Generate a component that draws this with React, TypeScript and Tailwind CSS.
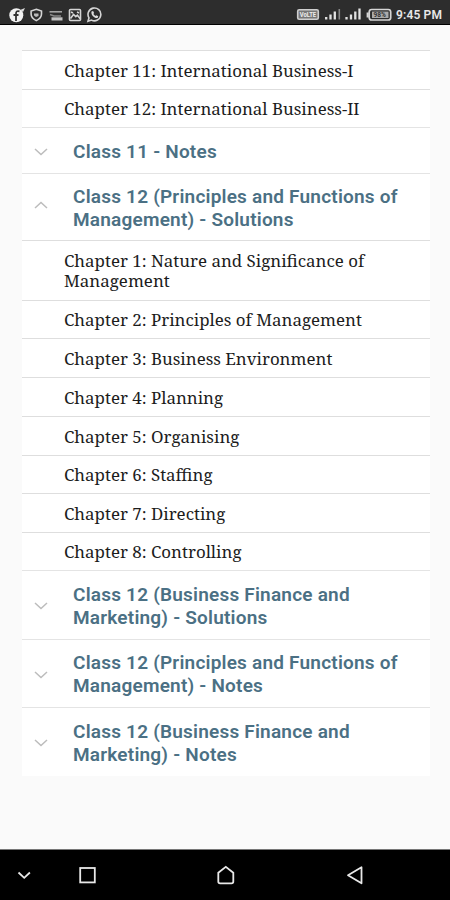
type Row = {
  kind: 'chapter' | 'section';
  title: string;
  size: string;
  open?: boolean;
};

const rows: Row[] = [
  { kind: 'chapter', title: 'Chapter 11: International Business-I', size: 'h-[39px]' },
  { kind: 'chapter', title: 'Chapter 12: International Business-II', size: 'h-[38px]' },
  { kind: 'section', title: 'Class 11 - Notes', size: 'h-[46px]' },
  { kind: 'section', title: 'Class 12 (Principles and Functions of Management) - Solutions', size: 'h-[67px]', open: true },
  { kind: 'chapter', title: 'Chapter 1: Nature and Significance of Management', size: 'h-[60px]' },
  { kind: 'chapter', title: 'Chapter 2: Principles of Management', size: 'h-[38px]' },
  { kind: 'chapter', title: 'Chapter 3: Business Environment', size: 'h-[39px]' },
  { kind: 'chapter', title: 'Chapter 4: Planning', size: 'h-[39px]' },
  { kind: 'chapter', title: 'Chapter 5: Organising', size: 'h-[39px]' },
  { kind: 'chapter', title: 'Chapter 6: Staffing', size: 'h-[38px]' },
  { kind: 'chapter', title: 'Chapter 7: Directing', size: 'h-[39px]' },
  { kind: 'chapter', title: 'Chapter 8: Controlling', size: 'h-[38px]' },
  { kind: 'section', title: 'Class 12 (Business Finance and Marketing) - Solutions', size: 'h-[69px]' },
  { kind: 'section', title: 'Class 12 (Principles and Functions of Management) - Notes', size: 'h-[68px]' },
  { kind: 'section', title: 'Class 12 (Business Finance and Marketing) - Notes', size: 'h-[69px]' },
];

function Chapter({ row }: { row: Row }) {
  return (
    <div
      className={`flex items-center border-t border-[#dedede] pl-[42px] pr-6 pt-px font-['Noto_Serif','DejaVu_Serif_Condensed','DejaVu_Serif',serif] text-[16.9px] leading-5 text-[#1c1c1c] ${row.size}`}
    >
      <p>{row.title}</p>
    </div>
  );
}

function Section({ row }: { row: Row }) {
  return (
    <div className={`flex items-center border-t border-[#e4e4e4] ${row.size}`}>
      <svg
        className={`ml-3 h-3.5 w-3.5 shrink-0 ${row.open ? '-mt-1' : 'mt-0.5'}`}
        viewBox="0 0 14 14"
        fill="none"
        stroke="#bcbcbc"
        strokeWidth="1.5"
      >
        {row.open ? <path d="M1 10 7 4.5 13 10" /> : <path d="M1 4 7 9.5 13 4" />}
      </svg>
      <p className="ml-[25px] w-[340px] pt-px font-[Roboto,sans-serif] text-[19px] font-semibold leading-[23px] tracking-[0.21px] text-[#4b7084]">
        {row.title}
      </p>
    </div>
  );
}

function StatusBar() {
  return (
    <div className="flex h-[25px] items-center border-b border-black bg-[#2d2d2d] pl-[9px] pt-1.5">
      <svg width="95" height="17" viewBox="9 7 95 17" fill="none" stroke="#d5d5d5" strokeWidth="1.6">
        <circle cx="16.3" cy="15.3" r="7" fill="#f2f2f2" stroke="none" />
        <path d="M20 10 25 8l-2 4" fill="#ddd" stroke="none" />
        <path d="M19.5 11.3c-2.5-.8-3.5.3-3.5 2.4V21M13.5 15h5" stroke="#333" strokeWidth="1.8" />
        <path d="M36.3 9.3 41.5 11v3c0 3.3-2.3 5.2-5.2 6.6-2.9-1.4-5.2-3.3-5.2-6.6v-3z" />
        <path d="M34 13.5h4.5v2.5L36 17l-2-1.5z" fill="#bbb" stroke="none" />
        <path d="M49.5 11.8h12.5" stroke="#aaa" strokeWidth="1.5" />
        <path d="M50 14.5l4 1.5h7" stroke="#888" strokeWidth="1.5" />
        <path d="M51.5 18.9h11" stroke="#c2c2c2" strokeWidth="3.2" />
        <rect x="69.5" y="9.5" width="11" height="11" rx="1" />
        <path d="m70.5 18.5 3-4 2.3 2.2 1.6-1.5 2.8 3.5M71 12l2 1M77 12l2 1" />
        <path d="M88 21.3 89 17.8a6.4 6.4 0 1 1 2.5 2.3z" />
        <path d="M91.5 11.5c-.8 3.5 2.8 7 6 6.5l.8-1.8-2-1-1 .8-2-2 .8-1-1-2z" fill="#ddd" stroke="none" />
      </svg>
      <div className="flex-1" />
      <svg width="97" height="17" viewBox="295 7 97 17" fill="none">
        <rect x="297.7" y="9.7" width="20.6" height="9.6" rx="1.5" stroke="#cfcfcf" strokeWidth="1.6" fill="#777" />
        <text x="299.7" y="17" fontSize="6.3" fontWeight="bold" fill="#eee" fontFamily="Roboto" textLength="16.5" lengthAdjust="spacingAndGlyphs">VoLTE</text>
        <path d="M326.2 17v2.5M330.5 14.5v5M334.8 11.5v8M346.5 17v2.5M351 14.5v5M355.3 11.5v8M359.5 8.5v11" stroke="#e2e2e2" strokeWidth="2.3" />
        <path d="M339.3 9v10.5" stroke="#888" strokeWidth="1.6" />
        <rect x="369.2" y="9.5" width="21.5" height="10.5" rx="2.5" stroke="#d5d5d5" strokeWidth="1.7" />
        <path d="M367.7 12.5v5" stroke="#d5d5d5" strokeWidth="2.2" />
        <rect x="372" y="11.6" width="16.5" height="6.4" fill="#aaa" />
        <text x="373.5" y="17.3" fontSize="6.6" fontWeight="bold" fill="#333" fontFamily="Roboto">98%</text>
      </svg>
      <div className="ml-1 w-[54px] whitespace-nowrap font-[Roboto,sans-serif] text-[12px] font-semibold leading-4 tracking-[0.15px] text-[#e8e8e8]">9:45 PM</div>
    </div>
  );
}

function NavigationBar() {
  return (
    <div className="h-[51px] border-t border-[#777] bg-black">
      <svg width="450" height="50" viewBox="0 850 450 50" fill="none" stroke="#e8e8e8" strokeWidth="1.8">
        <path d="m18.5 872.5 5.7 5.3 5.7-5.3" />
        <rect x="80.2" y="868" width="14.6" height="14.4" />
        <path d="M218.3 872.8 225.8 866.8 233.3 872.8V881.5Q233.3 883.3 231.5 883.3H220.1Q218.3 883.3 218.3 881.5Z" />
        <path d="M348 875.3 361.5 867.3V883.3Z" strokeLinejoin="round" />
      </svg>
    </div>
  );
}

export default function App() {
  return (
    <div className="flex h-[900px] w-[450px] flex-col overflow-hidden bg-[#fafafa]">
      <StatusBar />
      <main className="flex-1 pl-[22px] pt-[25px]">
        <div className="w-[408px] bg-white">
          {rows.map((row, i) => (row.kind === 'chapter' ? <Chapter key={i} row={row} /> : <Section key={i} row={row} />))}
        </div>
      </main>
      <NavigationBar />
    </div>
  );
}
